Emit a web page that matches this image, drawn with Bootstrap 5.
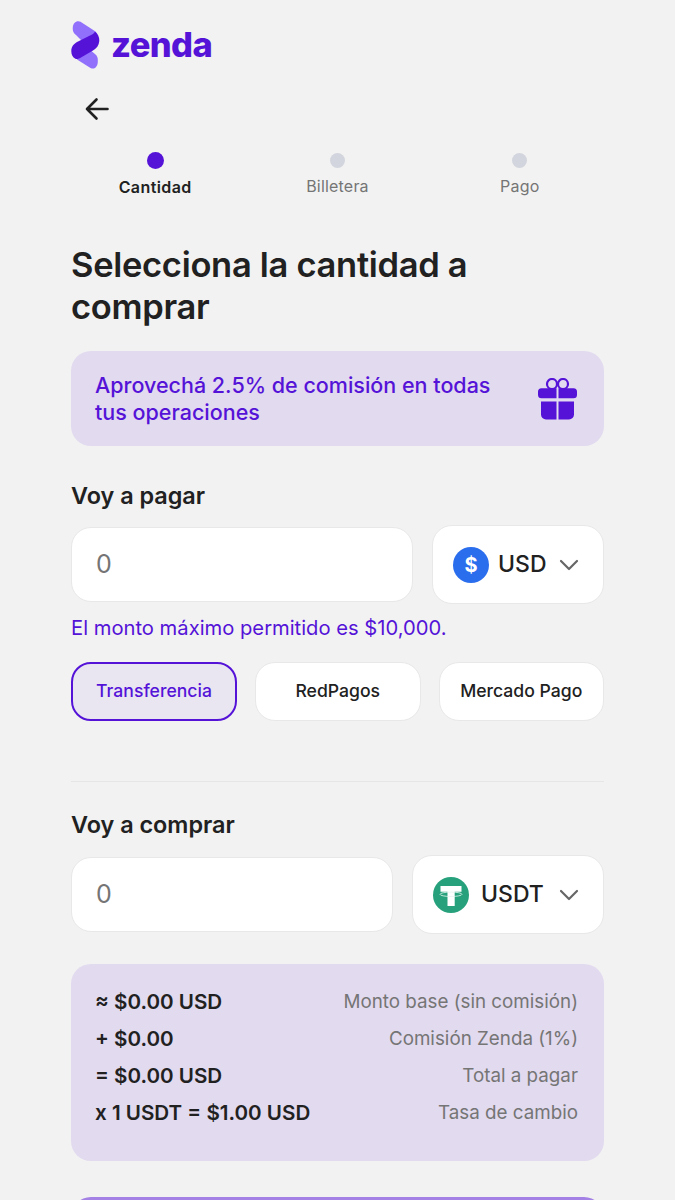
<!DOCTYPE html>
<html lang="es">
<head>
  <meta charset="utf-8">
  <meta name="viewport" content="width=device-width,initial-scale=1">
  <title>Zenda</title>
  <link href="https://cdn.jsdelivr.net/npm/bootstrap@5.3.0/dist/css/bootstrap.min.css" rel="stylesheet">
  <style>
    html, body { height: 1200px; overflow: hidden; }
    body { background: #f2f2f2; color: #212121; font-family: Inter, "Noto Sans", sans-serif; }
    .zn-page { padding: 21px 71px 0; }
    .zn-logo-text { color: #5513d8; font-size: 34.5px; font-weight: 800; line-height: 48px; letter-spacing: -.6px; margin-left: 10px; }
    .zn-back { height: 32px; margin-top: 26px; padding-left: 13px; }
    .zn-steps { margin: 25px -7px 0; }
    .zn-step { flex: 1 1 0; font-size: 16px; line-height: 20px; color: #757575; letter-spacing: .2px; }
    .zn-step.is-on { color: #212121; font-weight: 600; letter-spacing: .4px; }
    .zn-dot { width: 15px; height: 15px; margin: 1px auto 8px; border-radius: 50%; background: #d2d5dd; }
    .is-on .zn-dot { width: 17px; height: 17px; margin: 0 auto 8px; background: #5513d8; }
    .zn-title { font-size: 34.5px; font-weight: 600; line-height: 42px; letter-spacing: -.3px; margin: 47px 0 23px; }
    .zn-promo { background: #e2daef; color: #5513d8; border-radius: 20px; height: 95px; padding: 0 27px 0 24px; font-size: 21.5px; font-weight: 500; line-height: 27px; }
    .zn-label { font-size: 23.4px; font-weight: 600; line-height: 30px; margin: 0; }
    .zn-box { background: #fff; border: 1px solid #e8e8e8; border-radius: 20px; }
    .zn-amount { height: 75px; padding-left: 24px; font-size: 25px; color: #757575; }
    .zn-cur { height: 79px; font-size: 23px; font-weight: 500; padding-left: 20px; }
    .zn-cur svg.zn-ico { margin-right: 9px; }
    .zn-chev { margin-left: auto; margin-right: 24px; }
    .zn-hint { color: #5513d8; font-size: 20.2px; line-height: 26px; margin: 11px 0 21px; }
    .zn-pay { height: 59px; flex: 1 1 0; font-size: 17.6px; font-weight: 500; }
    .zn-pay.is-on { flex: 0 0 166px; background: #e9e6f2; border: 2px solid #5513d8; color: #5513d8; }
    .zn-rule { border-top: 1px solid #e6e6e6; margin: 60px 0 28px; }
    .zn-sum { background: #e2daef; border-radius: 20px; height: 197px; padding: 19px 26px 0 24px; margin-top: 30px; font-size: 18.8px; line-height: 37px; color: #757575; }
    .zn-sum strong { color: #212121; font-weight: 600; font-size: 20.6px; }
    .zn-cta { height: 60px; margin-top: 36px; background: #a481e4; border-radius: 20px; }
  </style>
</head>
<body>
  <div class="zn-page">

    <!-- logo -->
    <div class="d-flex align-items-center">
      <svg width="30" height="48" viewBox="0 0 30 48">
        <path d="M3.500 2C5 .2 7.500-.4 9.500.8L23 9.500c3 2 4 4.500 4 8.500l-15 3-7-7C2.500 12 1.500 10 1.800 6.500 1.900 4.500 2.500 3 3.500 2z" fill="#9170fb"/>
        <path d="M8 30l10-2 6 5c2.500 2 3 4 2.800 8-.1 2-.8 4-1.800 5-1.500 1.800-3.500 2-5.500 1L6 38.500z" fill="#9170fb"/>
        <path d="M24 10.500c3 2.500 4.500 5.500 4.300 9.500-.3 4.500-2.800 7.500-6.300 9.500l-12 7c-2.500 1.500-4.500 2-6 1-2.500-1.500-3.700-4-3.700-7.500 0-4.500 2.700-7.500 6.700-9.500l11-5.500c3-1.500 5.500-2.500 6-4.500z" fill="#5513d8"/>
      </svg>
      <span class="zn-logo-text">zenda</span>
    </div>

    <!-- back -->
    <div class="zn-back">
      <svg width="26" height="26" viewBox="0 0 26 26" fill="none" stroke="#212121" stroke-width="2.600" stroke-linecap="round" stroke-linejoin="round">
        <path d="M23.500 13H3M12.500 3.500 3 13l9.500 9.500"/>
      </svg>
    </div>

    <!-- steps -->
    <div class="zn-steps d-flex text-center">
      <div class="zn-step is-on"><div class="zn-dot"></div>Cantidad</div>
      <div class="zn-step"><div class="zn-dot"></div>Billetera</div>
      <div class="zn-step"><div class="zn-dot"></div>Pago</div>
    </div>

    <h1 class="zn-title">Selecciona la cantidad a comprar</h1>

    <div class="zn-promo d-flex align-items-center justify-content-between">
      <span>Aprovechá 2.5% de comisión en todas<br>tus operaciones</span>
      <svg class="flex-shrink-0" width="39" height="42" viewBox="0 0 39 42" fill="#5513d8">
        <circle cx="14" cy="6" r="5" fill="none" stroke="#5513d8" stroke-width="2.200"/>
        <circle cx="25" cy="6" r="5" fill="none" stroke="#5513d8" stroke-width="2.200"/>
        <path d="M3.500 10.300h15v10h-15A3.500 3.500 0 0 1 0 16.800v-3a3.500 3.500 0 0 1 3.500-3.500zM20.500 10.300h15a3.500 3.500 0 0 1 3.500 3.500v3a3.500 3.500 0 0 1-3.500 3.500h-15z"/>
        <path d="M3 23.500h15.500V41.500H8a5 5 0 0 1-5-5zM20.500 23.500H36v13a5 5 0 0 1-5 5H20.500z"/>
      </svg>
    </div>

    <!-- voy a pagar -->
    <p class="zn-label" style="margin-top:35px">Voy a pagar</p>
    <div class="d-flex align-items-center justify-content-between" style="gap:19px;margin-top:14px">
      <div class="zn-box zn-amount flex-grow-1 d-flex align-items-center">0</div>
      <div class="zn-box zn-cur d-flex align-items-center flex-shrink-0" style="width:172px">
        <svg class="zn-ico" width="36" height="36" viewBox="0 0 36 36"><circle cx="18" cy="18" r="18" fill="#2a6ded"/><text x="18" y="25" text-anchor="middle" fill="#fff" font-family="Inter, sans-serif" font-size="20" font-weight="700">$</text></svg>
        USD
        <svg class="zn-chev" width="20" height="12" viewBox="0 0 20 12" fill="none" stroke="#666" stroke-width="2.200" stroke-linecap="round" stroke-linejoin="round"><path d="M2 2l8 8 8-8"/></svg>
      </div>
    </div>
    <p class="zn-hint">El monto máximo permitido es $10,000.</p>
    <div class="d-flex" style="gap:18px">
      <div class="zn-box zn-pay is-on d-flex align-items-center justify-content-center">Transferencia</div>
      <div class="zn-box zn-pay d-flex align-items-center justify-content-center">RedPagos</div>
      <div class="zn-box zn-pay d-flex align-items-center justify-content-center">Mercado Pago</div>
    </div>

    <div class="zn-rule"></div>

    <!-- voy a comprar -->
    <p class="zn-label">Voy a comprar</p>
    <div class="d-flex align-items-center justify-content-between" style="gap:19px;margin-top:15px">
      <div class="zn-box zn-amount flex-grow-1 d-flex align-items-center">0</div>
      <div class="zn-box zn-cur d-flex align-items-center flex-shrink-0" style="width:192px">
        <svg class="zn-ico" width="36" height="36" viewBox="0 0 36 36" style="margin-right:12px"><circle cx="18" cy="18" r="18" fill="#26a17b"/><path d="M7.500 9h21v5.700h-6.800V29h-7.200V14.700H7.500z" fill="#fff"/><ellipse cx="18" cy="17.300" rx="11" ry="2.200" fill="none" stroke="#e6f5ef" stroke-width=".8"/></svg>
        USDT
        <svg class="zn-chev" width="20" height="12" viewBox="0 0 20 12" fill="none" stroke="#666" stroke-width="2.200" stroke-linecap="round" stroke-linejoin="round"><path d="M2 2l8 8 8-8"/></svg>
      </div>
    </div>

    <!-- resumen -->
    <div class="zn-sum">
      <div class="d-flex justify-content-between"><strong>≈ $0.00 USD</strong><span>Monto base (sin comisión)</span></div>
      <div class="d-flex justify-content-between"><strong>+ $0.00</strong><span>Comisión Zenda (1%)</span></div>
      <div class="d-flex justify-content-between"><strong>= $0.00 USD</strong><span>Total a pagar</span></div>
      <div class="d-flex justify-content-between"><strong>x 1 USDT = $1.00 USD</strong><span>Tasa de cambio</span></div>
    </div>

    <div class="zn-cta"></div>
  </div>

  <script src="https://cdn.jsdelivr.net/npm/bootstrap@5.3.0/dist/js/bootstrap.bundle.min.js"></script>
</body>
</html>
